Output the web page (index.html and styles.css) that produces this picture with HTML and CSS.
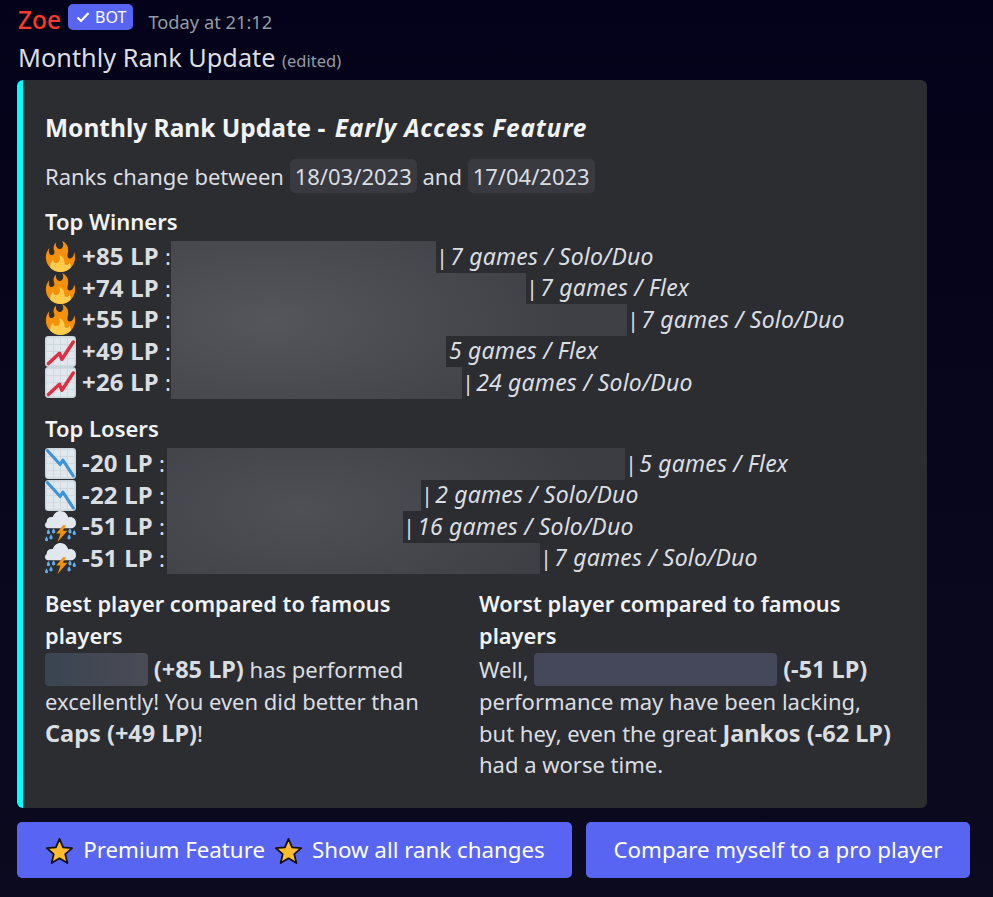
FILE: index.html
```html
<!DOCTYPE html>
<html lang="en">
<head>
<meta charset="utf-8">
<title>Monthly Rank Update</title>
<link rel="stylesheet" href="styles.css">
</head>
<body>
<svg class="defs" width="0" height="0" aria-hidden="true">
  <defs>
    <symbol id="fire" viewBox="0 0 36 36">
      <path fill="#F4900C" d="M35 19c0-2.062-.367-4.039-1.04-5.868-.46 5.389-3.333 8.157-6.335 6.868-2.812-1.208-.917-5.917-.777-8.164.236-3.809-.012-8.169-6.931-11.794 2.875 5.500.333 8.917-2.333 9.125-2.958.231-5.667-2.542-4.667-7.042-3.238 2.386-3.332 6.402-2.333 9 1.042 2.708-.042 4.958-2.583 5.208-2.840.28-4.418-3.041-2.963-8.333C2.520 10.965 1 14.805 1 19c0 9.389 7.611 17 17 17s17-7.611 17-17z"/>
      <path fill="#FFCC4D" d="M28.394 23.999c.148 3.084-2.561 4.293-4.019 3.709-2.106-.843-1.541-2.291-2.083-5.291s-2.625-5.083-5.708-6c2.250 6.333-1.247 8.667-3.080 9.084-1.872.426-3.753-.001-3.968-4.007C7.352 23.668 6 26.676 6 30c0 .34.023.673.056 1.004C9.362 34.217 13.636 36 18 36c4.364 0 8.638-1.783 11.944-4.996.033-.331.056-.664.056-1.004 0-2.001-.6-4-1.606-6.001z"/>
    </symbol>
    <symbol id="up" viewBox="0 0 36 36">
      <rect fill="#CCD6DD" width="36" height="36" rx="4"/>
      <rect fill="#E1E8ED" x="2" y="2" width="32" height="32"/>
      <path stroke="#CCD6DD" stroke-width="1" fill="none" d="M10 2v32M18 2v32M26 2v32M2 10h32M2 18h32M2 26h32"/>
      <path fill="none" stroke="#DD2E44" stroke-width="4" stroke-linecap="round" stroke-linejoin="round" d="M4 32 16.800 20l2.800 7L32.800 7"/>
    </symbol>
    <symbol id="down" viewBox="0 0 36 36">
      <rect fill="#CCD6DD" width="36" height="36" rx="4"/>
      <rect fill="#E1E8ED" x="2" y="2" width="32" height="32"/>
      <path stroke="#CCD6DD" stroke-width="1" fill="none" d="M10 2v32M18 2v32M26 2v32M2 10h32M2 18h32M2 26h32"/>
      <path fill="none" stroke="#3B94D9" stroke-width="3.600" stroke-linecap="round" stroke-linejoin="round" d="M3 3.200 17.600 19.200 20.800 14 32.800 32.400"/>
    </symbol>
    <symbol id="storm" viewBox="0 0 36 36">
      <path fill="#E1E8ED" d="M29.500 7c-.9 0-1.700.2-2.500.5C26 3.200 22.200 0 18 0c-4.300 0-8 3-8.800 7.100C8.600 7 8.100 7 7.500 7 4.400 7 2 9.200 2 12c0 .3 0 .6.100.9C.8 13.700 0 15 0 16.500 0 18.400 1.600 20 3.500 20h27c3 0 5.500-2.500 5.500-5.500V13.500C36 9.900 33.100 7 29.500 7z"/>
      <path fill="#F4900C" d="M21 16.500l-8 9.500h5l-3.500 10L26 23h-5.500l4-6.500z"/>
      <path fill="#5DADEC" d="M6 25a2 2 0 1 1-4 0c0-1.100 2-4 2-4s2 2.900 2 4zM12 24a2 2 0 1 1-4 0c0-1.100 2-4 2-4s2 2.900 2 4zM9 31a2 2 0 1 1-4 0c0-1.100 2-4 2-4s2 2.900 2 4zM3.500 33a1.800 1.800 0 1 1-3.500 0c0-1 1.800-3.500 1.800-3.500s1.700 2.500 1.700 3.500zM31 24a2 2 0 1 1-4 0c0-1.100 2-4 2-4s2 2.900 2 4zM36 26a2 2 0 1 1-4 0c0-1.100 2-4 2-4s2 2.900 2 4zM30 31a2 2 0 1 1-4 0c0-1.100 2-4 2-4s2 2.900 2 4z"/>
    </symbol>
    <symbol id="star" viewBox="0 0 36 36">
      <path fill="#FFBD2E" stroke="#12100c" stroke-width="2.400" stroke-linejoin="round" d="M18 2.500l4.800 11.300 12 1-9.100 8 2.800 12L18 28.400 7.500 34.800l2.800-12-9.100-8 12-1z"/>
    </symbol>
  </defs>
</svg>

<main class="message">
  <header class="head">
    <span class="author">Zoe</span>
    <span class="badge"><svg class="check" viewBox="0 0 16 16"><path d="M2.500 8.500l3.500 3.500L13.500 4" fill="none" stroke="#fff" stroke-width="2.200"/></svg>BOT</span>
    <time class="stamp">Today at 21:12</time>
  </header>
  <p class="content">Monthly Rank Update <small class="edited">(edited)</small></p>

  <article class="embed">
    <h1 class="title">Monthly Rank Update - <em>Early Access Feature</em></h1>
    <p class="range">Ranks change between <code class="date">18/03/2023</code> and <code class="date">17/04/2023</code></p>

    <h2 class="sub">Top Winners</h2>
    <ul class="ranks winners">
      <li><svg class="emo"><use href="#fire"/></svg><span class="label"><b>+85 LP</b>:</span><span class="spoil" style="width:265px"></span><span class="bar">|</span><i>7 games / Solo/Duo</i></li>
      <li><svg class="emo"><use href="#fire"/></svg><span class="label"><b>+74 LP</b>:</span><span class="spoil" style="width:355px"></span><span class="bar">|</span><i>7 games / Flex</i></li>
      <li><svg class="emo"><use href="#fire"/></svg><span class="label"><b>+55 LP</b>:</span><span class="spoil" style="width:456px"></span><span class="bar">|</span><i>7 games / Solo/Duo</i></li>
      <li><svg class="emo"><use href="#up"/></svg><span class="label"><b>+49 LP</b>:</span><span class="spoil" style="width:275px"></span><i class="tight">5 games / Flex</i></li>
      <li><svg class="emo"><use href="#up"/></svg><span class="label"><b>+26 LP</b>:</span><span class="spoil" style="width:291px"></span><span class="bar">|</span><i>24 games / Solo/Duo</i></li>
    </ul>

    <h2 class="sub losers-head">Top Losers</h2>
    <ul class="ranks losers">
      <li><svg class="emo"><use href="#down"/></svg><span class="label"><b>-20 LP</b>:</span><span class="spoil" style="width:458px"></span><span class="bar">|</span><i>5 games / Flex</i></li>
      <li><svg class="emo"><use href="#down"/></svg><span class="label"><b>-22 LP</b>:</span><span class="spoil" style="width:254px"></span><span class="bar">|</span><i>2 games / Solo/Duo</i></li>
      <li><svg class="emo"><use href="#storm"/></svg><span class="label"><b>-51 LP</b>:</span><span class="spoil" style="width:236px"></span><span class="bar">|</span><i>16 games / Solo/Duo</i></li>
      <li><svg class="emo"><use href="#storm"/></svg><span class="label"><b>-51 LP</b>:</span><span class="spoil" style="width:373px"></span><span class="bar">|</span><i>7 games / Solo/Duo</i></li>
    </ul>

    <section class="cols">
      <div class="col">
        <h2 class="colhead">Best player compared to famous players</h2>
        <p class="coltext"><span class="blur best" style="width:103px"></span> <b>(+85 LP)</b> has performed excellently! You even did better than <b>Caps (+49 LP)</b>!</p>
      </div>
      <div class="col">
        <h2 class="colhead">Worst player compared to famous players</h2>
        <p class="coltext">Well, <span class="blur worst" style="width:243px"></span> <b>(-51 LP)</b> performance may have been lacking, but hey, even the great <b>Jankos (-62 LP)</b> had a worse time.</p>
      </div>
    </section>
  </article>

  <nav class="actions">
    <button class="btn premium"><svg class="star"><use href="#star"/></svg><span>Premium Feature</span><svg class="star"><use href="#star"/></svg><span>Show all rank changes</span></button>
    <button class="btn compare">Compare myself to a pro player</button>
  </nav>
</main>
</body>
</html>
```
FILE: styles.css
```css
* { box-sizing: border-box; }
html, body { margin: 0; height: 100%; }
body {
  background: linear-gradient(180deg, #04021a 0%, #0b0a1e 100%);
  color: #dbdee1;
  font-family: "Noto Sans", "Liberation Sans", sans-serif;
  font-size: 22px;
  overflow: hidden;
}
.defs { position: absolute; }
.message { padding: 0 0 0 17px; width: 993px; }
.head { display: flex; align-items: center; height: 40px; }
.author { color: #f83b2a; font-size: 24.500px; font-weight: 500; line-height: 40px; margin-left: 1px; }
.badge {
  display: inline-flex; align-items: center; gap: 4px;
  background: #5865f2; color: #fff;
  font-size: 16px; height: 26px; padding: 0 7px;
  border-radius: 5px; margin: -6px 0 0 7px;
}
.check { width: 16px; height: 16px; }
.stamp { color: #949ba4; font-size: 18.300px; margin-left: 15px; padding-top: 3px; }
.content { margin: 0; height: 36px; font-size: 25.300px; line-height: 34px; padding-left: 1px; color: #dbdee1; }
.edited { font-size: 16.500px; color: #949ba4; }
.embed {
  width: 910px; height: 728px; margin-top: 4px;
  background: #2b2d31;
  border-left: 6px solid #00ffff;
  border-radius: 6px;
  padding: 28px 22px 0 22px;
}
.title { margin: 0; font-size: 24.500px; line-height: 40px; font-weight: 700; color: #f2f3f5; }
.title em { letter-spacing: .8px; margin-left: 3px; }
.range { margin: 11px 0 0; line-height: 34px; }
.date {
  font: inherit; background: #383a40; border-radius: 5px; padding: 2px 5px;
}
.sub { margin: 13px 0 0; font-size: 22px; line-height: 31.500px; font-weight: 600; color: #f2f3f5; }
.losers-head { margin-top: 14.500px; }
.ranks { list-style: none; margin: 3.500px 0 0; padding: 0; }
.ranks li { display: flex; align-items: center; height: 31.500px; white-space: pre; }
.ranks i { color: #dbdee1; font-size: 23px; letter-spacing: .2px; margin-bottom: 2px; }
.label { display: block; flex: none; margin-bottom: 2px; }
.winners .label { width: 95px; }
.losers .label { width: 91px; }
.label b { font-size: 24px; margin: 0 6px; letter-spacing: .2px; }
.emo { width: 31px; height: 31px; flex: none; }
.spoil { display: block; height: 31.500px; flex: none; }
.winners .spoil { background: radial-gradient(ellipse 300px 140px at 270px 320px, #55565b, #3f4045) fixed; }
.losers .spoil { background: radial-gradient(ellipse 300px 140px at 300px 510px, #4f5055, #3c3d42) fixed; }
.bar { margin: 0 2px 2px 0; }
.tight { margin-left: 3px; }
.cols { display: grid; grid-template-columns: 422px 422px; column-gap: 12px; margin-top: 14px; }
.colhead { margin: 0; font-size: 21.800px; line-height: 31.500px; font-weight: 600; color: #f2f3f5; }
.coltext { margin: 0; line-height: 31.500px; }
.coltext b { font-size: 23.500px; }
.blur {
  display: inline-block; height: 33px; margin-top: 2px; vertical-align: -8px; border-radius: 4px;
}
.best { background: linear-gradient(90deg, #3a4552, #4a4b55); }
.worst { background: #45475a; }
.actions { display: flex; gap: 14px; margin-top: 14px; }
.btn {
  height: 56px; border: 0; border-radius: 5px; background: #5865f2; color: #fff;
  font: inherit; font-size: 22.300px; display: flex; align-items: center; justify-content: center;
  padding: 0 0 2px;
}
.premium { width: 555px; gap: 10px; padding-left: 2px; }
.compare { width: 384px; }
.star { width: 27px; height: 27px; margin-top: 2px; }
```
